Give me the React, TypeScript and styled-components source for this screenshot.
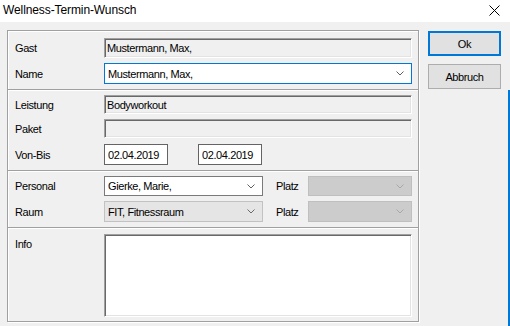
import React from 'react'
import styled, { createGlobalStyle, css } from 'styled-components'

const GlobalStyle = createGlobalStyle`
	html, body {
		margin: 0;
		height: 100%;
		overflow: hidden;
		background: #f0f0f0;
	}
	body {
		font-family: 'Liberation Sans', Arial, sans-serif;
		font-size: 11px;
		letter-spacing: -0.4px;
		color: #000;
	}
`

const Window = styled.div`
	width: 510px;
	height: 326px;
	display: flex;
	flex-direction: column;
	background: #f0f0f0;
	box-sizing: border-box;
`

const TitleBar = styled.div`
	height: 22px;
	background: #fff;
	display: flex;
	align-items: center;
	justify-content: space-between;
	padding: 0 10px 2px 3px;
	box-sizing: border-box;
`

const Title = styled.span`
	font-size: 12px;
	letter-spacing: -0.1px;
	color: #000;
`

const Content = styled.div`
	display: flex;
	gap: 9px;
	padding: 8px 0 0 7px;
	align-items: flex-start;
`

const Panel = styled.div`
	width: 412px;
	height: 292px;
	box-sizing: border-box;
	border: 1px solid #a0a0a0;
	box-shadow: 1px 1px 0 #fff, inset 1px 1px 0 #fff;
	display: flex;
	flex-direction: column;
`

const Section = styled.div<{ $pad: string; $grow?: boolean }>`
	display: flex;
	flex-direction: column;
	padding: ${(p) => p.$pad};
	padding-left: 7px;
	padding-right: 6px;
	${(p) => p.$grow && 'flex: 1;'}
`

const Separator = styled.div`
	height: 0;
	border-top: 1px solid #a0a0a0;
	border-bottom: 1px solid #fff;
`

const Row = styled.div<{ $h: number; $mt?: number; $top?: boolean }>`
	display: flex;
	align-items: ${(p) => (p.$top ? 'flex-start' : 'center')};
	height: ${(p) => p.$h}px;
	margin-top: ${(p) => p.$mt || 0}px;
`

const Label = styled.div<{ $pt?: number }>`
	width: 89px;
	flex-shrink: 0;
	padding-top: ${(p) => p.$pt || 0}px;
`

const sunken = css`
	border: 1px solid;
	border-color: #a0a0a0 #fff #fff #a0a0a0;
	box-shadow: inset 1px 1px 0 #696969, inset -1px -1px 0 #e3e3e3;
`

const Field = styled.div`
	${sunken}
	box-sizing: border-box;
	width: 308px;
	height: 100%;
	background: #f0f0f0;
	display: flex;
	align-items: center;
	padding-left: 2px;
	white-space: nowrap;
	overflow: hidden;
`

const Memo = styled(Field)`
	background: #fff;
`

const DateBox = styled.div`
	box-sizing: border-box;
	width: 64px;
	height: 100%;
	border: 1px solid #646464;
	background: #fff;
	display: flex;
	align-items: center;
	padding-left: 3px;
	& + & {
		margin-left: 30px;
	}
`

type ComboKind = 'focus' | 'normal' | 'readonly' | 'disabled'

const comboColors: Record<ComboKind, [string, string, string]> = {
	focus: ['#0078d7', '#fff', '#606060'],
	normal: ['#7a7a7a', '#fff', '#606060'],
	readonly: ['#c2c2c2', '#e5e5e5', '#6a6a6a'],
	disabled: ['#bfbfbf', '#cccccc', '#a8a8a8'],
}

const ComboBox = styled.div<{ $kind: ComboKind; $w: number }>`
	box-sizing: border-box;
	width: ${(p) => p.$w}px;
	height: 100%;
	border: 1px solid ${(p) => comboColors[p.$kind][0]};
	background: ${(p) => comboColors[p.$kind][1]};
	color: ${(p) => comboColors[p.$kind][2]};
	display: flex;
	align-items: center;
	justify-content: space-between;
	padding: 0 7px 0 3px;
	& > span {
		color: #000;
	}
`

const SideLabel = styled.div`
	width: 45px;
	padding-left: 13px;
	box-sizing: border-box;
`

const ButtonColumn = styled.div`
	display: flex;
	flex-direction: column;
	gap: 8px;
	padding-top: 1px;
`

const Button = styled.button<{ $primary?: boolean }>`
	width: 73px;
	height: 25px;
	box-sizing: border-box;
	background: #e1e1e1;
	border: ${(p) => (p.$primary ? '2px solid #0078d7' : '1px solid #adadad')};
	font-family: inherit;
	font-size: 11px;
	letter-spacing: -0.4px;
	color: #000;
	padding: 0;
`

const EdgeLine = styled.div`
	position: absolute;
	right: 0;
	top: 90px;
	bottom: 0;
	width: 2px;
	background: #0078d7;
`

const Chevron = () => (
	<svg width="8" height="5" viewBox="0 0 8 5">
		<path d="M0.5 0.5 L4 4 L7.5 0.5" fill="none" stroke="currentColor" strokeWidth="1" />
	</svg>
)

const Combo = ({ kind, w, text }: { kind: ComboKind; w: number; text?: string }) => (
	<ComboBox $kind={kind} $w={w}>
		<span>{text}</span>
		<Chevron />
	</ComboBox>
)

export default function App() {
	return (
		<Window>
			<GlobalStyle />
			<TitleBar>
				<Title>Wellness-Termin-Wunsch</Title>
				<svg width="11" height="11" viewBox="0 0 11 11">
					<path d="M0.5 0.5 L10.5 10.5 M10.5 0.5 L0.5 10.5" stroke="#000" strokeWidth="1" />
				</svg>
			</TitleBar>
			<Content>
				<Panel>
					<Section $pad="7px 0 5px">
						<Row $h={20}>
							<Label>Gast</Label>
							<Field>Mustermann, Max,</Field>
						</Row>
						<Row $h={21} $mt={5}>
							<Label>Name</Label>
							<Combo kind="focus" w={308} text="Mustermann, Max," />
						</Row>
					</Section>
					<Separator />
					<Section $pad="4px 0 5px">
						<Row $h={19}>
							<Label>Leistung</Label>
							<Field>Bodyworkout</Field>
						</Row>
						<Row $h={19} $mt={5}>
							<Label>Paket</Label>
							<Field />
						</Row>
						<Row $h={21} $mt={6}>
							<Label>Von-Bis</Label>
							<DateBox>02.04.2019</DateBox>
							<DateBox>02.04.2019</DateBox>
						</Row>
					</Section>
					<Separator />
					<Section $pad="4px 0 5px">
						<Row $h={20}>
							<Label>Personal</Label>
							<Combo kind="normal" w={159} text="Gierke, Marie," />
							<SideLabel>Platz</SideLabel>
							<Combo kind="disabled" w={104} />
						</Row>
						<Row $h={21} $mt={5}>
							<Label>Raum</Label>
							<Combo kind="readonly" w={159} text="FIT, Fitnessraum" />
							<SideLabel>Platz</SideLabel>
							<Combo kind="disabled" w={104} />
						</Row>
					</Section>
					<Separator />
					<Section $pad="5px 0 4px" $grow>
						<Row $h={83} $top>
							<Label $pt={4}>Info</Label>
							<Memo />
						</Row>
					</Section>
				</Panel>
				<ButtonColumn>
					<Button $primary>Ok</Button>
					<Button>Abbruch</Button>
				</ButtonColumn>
			</Content>
			<EdgeLine />
		</Window>
	)
}
